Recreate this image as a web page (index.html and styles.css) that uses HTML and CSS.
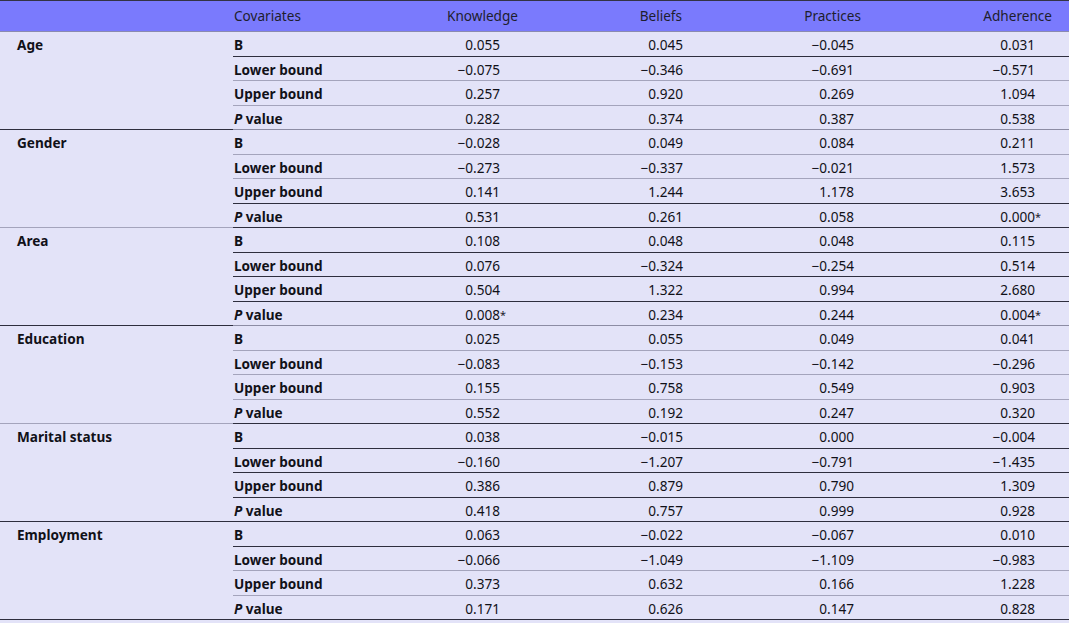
FILE: index.html
```html
<!DOCTYPE html>
<html>
<head>
<meta charset="utf-8">
<link rel="stylesheet" href="styles.css">
</head>
<body>
<table class="tbl">
  <colgroup>
    <col class="c-grp"><col class="c-cov"><col class="c-num"><col class="c-num"><col class="c-num"><col class="c-last">
  </colgroup>
  <thead>
    <tr>
      <th></th><th class="th-cov">Covariates</th><th>Knowledge</th><th>Beliefs</th><th>Practices</th><th>Adherence</th>
    </tr>
  </thead>
  <tbody>
    <tr class="dk"><td class="grp" rowspan="4">Age</td><td class="cov">B</td><td>0.055</td><td>0.045</td><td>−0.045</td><td>0.031</td></tr>
    <tr><td class="cov">Lower bound</td><td>−0.075</td><td>−0.346</td><td>−0.691</td><td>−0.571</td></tr>
    <tr><td class="cov">Upper bound</td><td>0.257</td><td>0.920</td><td>0.269</td><td>1.094</td></tr>
    <tr class="end"><td class="cov"><i>P</i> value</td><td>0.282</td><td>0.374</td><td>0.387</td><td>0.538</td></tr>

    <tr><td class="grp" rowspan="4">Gender</td><td class="cov">B</td><td>−0.028</td><td>0.049</td><td>0.084</td><td>0.211</td></tr>
    <tr><td class="cov">Lower bound</td><td>−0.273</td><td>−0.337</td><td>−0.021</td><td>1.573</td></tr>
    <tr class="dk"><td class="cov">Upper bound</td><td>0.141</td><td>1.244</td><td>1.178</td><td>3.653</td></tr>
    <tr class="end dk"><td class="cov"><i>P</i> value</td><td>0.531</td><td>0.261</td><td>0.058</td><td>0.000<span class="sig">*</span></td></tr>

    <tr class="dk"><td class="grp" rowspan="4">Area</td><td class="cov">B</td><td>0.108</td><td>0.048</td><td>0.048</td><td>0.115</td></tr>
    <tr class="dk"><td class="cov">Lower bound</td><td>0.076</td><td>−0.324</td><td>−0.254</td><td>0.514</td></tr>
    <tr class="dk"><td class="cov">Upper bound</td><td>0.504</td><td>1.322</td><td>0.994</td><td>2.680</td></tr>
    <tr class="end"><td class="cov"><i>P</i> value</td><td>0.008<span class="sig">*</span></td><td>0.234</td><td>0.244</td><td>0.004<span class="sig">*</span></td></tr>

    <tr><td class="grp" rowspan="4">Education</td><td class="cov">B</td><td>0.025</td><td>0.055</td><td>0.049</td><td>0.041</td></tr>
    <tr><td class="cov">Lower bound</td><td>−0.083</td><td>−0.153</td><td>−0.142</td><td>−0.296</td></tr>
    <tr><td class="cov">Upper bound</td><td>0.155</td><td>0.758</td><td>0.549</td><td>0.903</td></tr>
    <tr class="end dk"><td class="cov"><i>P</i> value</td><td>0.552</td><td>0.192</td><td>0.247</td><td>0.320</td></tr>

    <tr class="dk"><td class="grp" rowspan="4">Marital status</td><td class="cov">B</td><td>0.038</td><td>−0.015</td><td>0.000</td><td>−0.004</td></tr>
    <tr class="dk"><td class="cov">Lower bound</td><td>−0.160</td><td>−1.207</td><td>−0.791</td><td>−1.435</td></tr>
    <tr class="dk"><td class="cov">Upper bound</td><td>0.386</td><td>0.879</td><td>0.790</td><td>1.309</td></tr>
    <tr class="end dk"><td class="cov"><i>P</i> value</td><td>0.418</td><td>0.757</td><td>0.999</td><td>0.928</td></tr>

    <tr class="dk"><td class="grp" rowspan="4">Employment</td><td class="cov">B</td><td>0.063</td><td>−0.022</td><td>−0.067</td><td>0.010</td></tr>
    <tr><td class="cov">Lower bound</td><td>−0.066</td><td>−1.049</td><td>−1.109</td><td>−0.983</td></tr>
    <tr><td class="cov">Upper bound</td><td>0.373</td><td>0.632</td><td>0.166</td><td>1.228</td></tr>
    <tr class="end dk"><td class="cov"><i>P</i> value</td><td>0.171</td><td>0.626</td><td>0.147</td><td>0.828</td></tr>
  </tbody>
</table>
</body>
</html>
```

FILE: styles.css
```css
html, body {
  margin: 0;
  padding: 0;
  background: #e3e3f8;
}

.tbl {
  width: 1069px;
  border-collapse: collapse;
  table-layout: fixed;
  font-family: "Noto Sans", "DejaVu Sans", sans-serif;
  font-size: 13.6px;
  color: #111118;
  background: #e3e3f8;
}

.c-grp { width: 233px; }
.c-cov { width: 127px; }
.c-num { width: 170px; }
.c-last { width: 199px; }

.tbl thead tr {
  background: #7a7afd;
}

.tbl th {
  font-weight: normal;
  text-align: right;
  height: 30px;
  padding: 0;
  line-height: 30px;
  border-top: 1px solid #333344;
  border-bottom: 1px solid #8a8ab0;
  color: #1e1e2e;
}

.tbl th.th-cov {
  text-align: left;
  padding-left: 1px;
}

.tbl th:nth-last-child(4) { padding-right: 12px; }
.tbl th:nth-last-child(3) { padding-right: 18px; }
.tbl th:nth-last-child(2) { padding-right: 9px; }
.tbl th:nth-last-child(1) { padding-right: 17px; }

.tbl td {
  padding: 3px 0 0 0;
  line-height: 20.5px;
  text-align: right;
  vertical-align: top;
  border-bottom: 1px solid #a4a4bc;
  white-space: nowrap;
}

.tbl td:nth-last-child(4) { padding-right: 30px; }
.tbl td:nth-last-child(3) { padding-right: 17px; }
.tbl td:nth-last-child(2) { padding-right: 16px; }
.tbl td:nth-last-child(1) { padding-right: 34px; }

.tbl td.grp,
.tbl td.cov {
  text-align: left;
  font-weight: bold;
  padding-right: 0;
}

.tbl td.grp {
  padding-left: 17px;
}

.tbl td.cov {
  padding-left: 1px;
}

.tbl tr.dk td {
  border-bottom-color: #2e2e3e;
}

.tbl tr.end td {
  border-bottom-color: #8c8ca4;
}

.tbl tr.end.dk td {
  border-bottom-color: #2e2e3e;
}

.sig {
  display: inline-block;
  width: 0;
  overflow: visible;
  font-size: 0.8em;
  vertical-align: 1px;
}
```
